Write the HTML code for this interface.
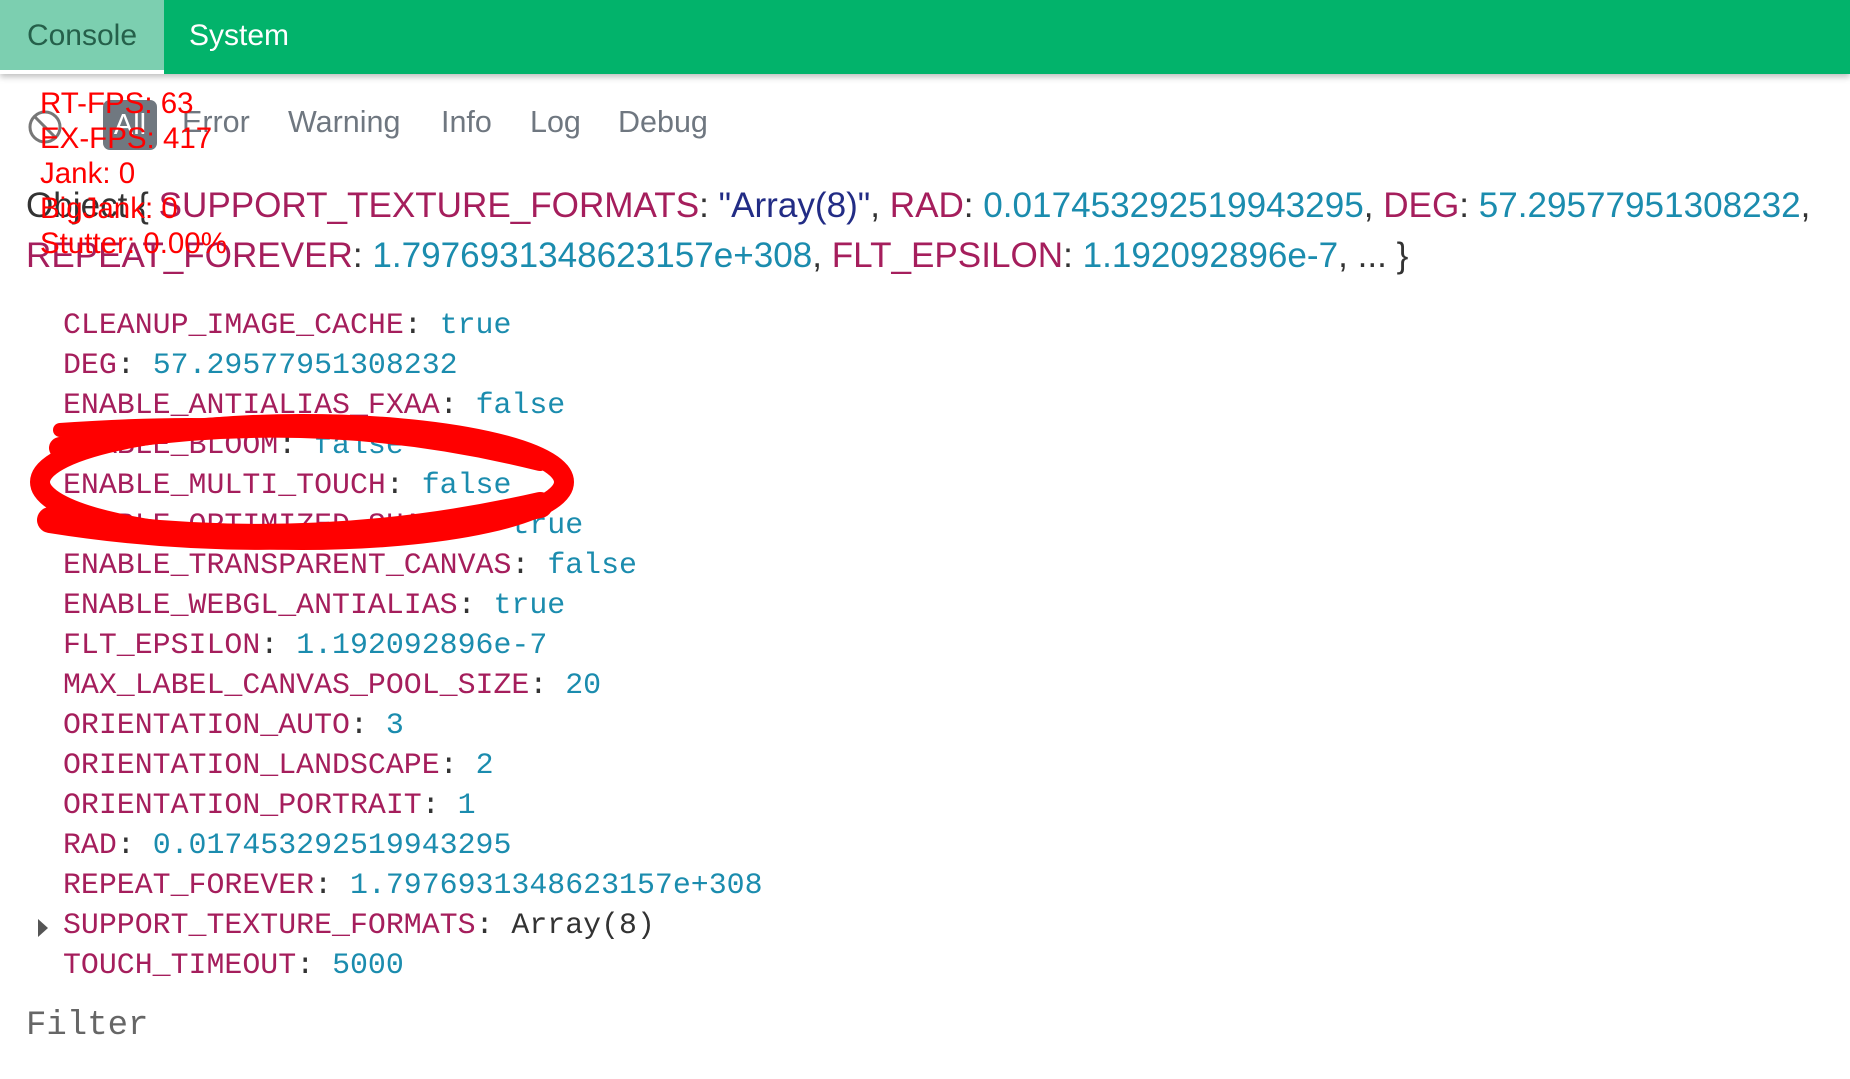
<!DOCTYPE html>
<html><head><meta charset="utf-8"><style>
body{margin:0;width:1850px;height:1079px;background:#fff;position:relative;overflow:hidden;font-family:"Liberation Sans",sans-serif}
.hdr{position:absolute;left:0;top:0;width:1850px;height:74px;background:#02b36b;box-shadow:0 3px 6px rgba(0,0,0,.25)}
.tab{position:absolute;top:0;height:74px;line-height:72px;font-size:30px;color:#fff}
.t1{left:0;width:164px;background:#7ccfb0;color:#25604a;text-align:center;border-bottom:4px solid #fff;box-sizing:border-box}
.t2{left:189px}
.flt{position:absolute;top:105px;font-size:30.5px;color:#6f7780}
.k{color:#a51e5c}.v{color:#1b8cae}.s{color:#222c85}
.line{position:absolute;left:26px;font-size:35.1px;white-space:nowrap;color:#333}
.m{position:absolute;left:63px;font-family:"Liberation Mono",monospace;font-size:29.9px;white-space:nowrap;color:#333}
.fps{position:absolute;left:40px;color:#f00;font-size:29.5px;line-height:35px;top:86px}
</style></head><body>
<div class="hdr"><div class="tab t1">Console</div><div class="tab t2">System</div></div>
<svg style="position:absolute;left:26px;top:108px" width="38" height="38"><circle cx="19" cy="19" r="15" fill="none" stroke="#777" stroke-width="3"/><line x1="9" y1="9" x2="29" y2="29" stroke="#777" stroke-width="3"/></svg>
<div style="position:absolute;left:103px;top:100px;width:54px;height:50px;background:#707880;border-radius:7px;color:#fff;font-size:29px;line-height:50px;text-align:center">All</div>
<div class="flt" style="left:182px">Error</div>
<div class="flt" style="left:288px">Warning</div>
<div class="flt" style="left:441px">Info</div>
<div class="flt" style="left:530px">Log</div>
<div class="flt" style="left:618px">Debug</div>
<div class="line" style="top:186px">Object { <span class="k">SUPPORT_TEXTURE_FORMATS</span>: <span class="s">"Array(8)"</span>, <span class="k">RAD</span>: <span class="v">0.017453292519943295</span>, <span class="k">DEG</span>: <span class="v">57.29577951308232</span>,</div>
<div class="line" style="top:236px"><span class="k">REPEAT_FOREVER</span>: <span class="v">1.7976931348623157e+308</span>, <span class="k">FLT_EPSILON</span>: <span class="v">1.192092896e-7</span>, ... }</div>
<div class="m" style="top:308px"><span class="k">CLEANUP_IMAGE_CACHE</span>: <span class="v">true</span></div>
<div class="m" style="top:348px"><span class="k">DEG</span>: <span class="v">57.29577951308232</span></div>
<div class="m" style="top:388px"><span class="k">ENABLE_ANTIALIAS_FXAA</span>: <span class="v">false</span></div>
<div class="m" style="top:428px"><span class="k">ENABLE_BLOOM</span>: <span class="v">false</span></div>
<div class="m" style="top:468px"><span class="k">ENABLE_MULTI_TOUCH</span>: <span class="v">false</span></div>
<div class="m" style="top:508px"><span class="k">ENABLE_OPTIMIZED_SHADOW</span>: <span class="v">true</span></div>
<div class="m" style="top:548px"><span class="k">ENABLE_TRANSPARENT_CANVAS</span>: <span class="v">false</span></div>
<div class="m" style="top:588px"><span class="k">ENABLE_WEBGL_ANTIALIAS</span>: <span class="v">true</span></div>
<div class="m" style="top:628px"><span class="k">FLT_EPSILON</span>: <span class="v">1.192092896e-7</span></div>
<div class="m" style="top:668px"><span class="k">MAX_LABEL_CANVAS_POOL_SIZE</span>: <span class="v">20</span></div>
<div class="m" style="top:708px"><span class="k">ORIENTATION_AUTO</span>: <span class="v">3</span></div>
<div class="m" style="top:748px"><span class="k">ORIENTATION_LANDSCAPE</span>: <span class="v">2</span></div>
<div class="m" style="top:788px"><span class="k">ORIENTATION_PORTRAIT</span>: <span class="v">1</span></div>
<div class="m" style="top:828px"><span class="k">RAD</span>: <span class="v">0.017453292519943295</span></div>
<div class="m" style="top:868px"><span class="k">REPEAT_FOREVER</span>: <span class="v">1.7976931348623157e+308</span></div>
<div class="m" style="top:908px"><span class="k">SUPPORT_TEXTURE_FORMATS</span>: Array(8)</div>
<svg style="position:absolute;left:36px;top:917px" width="14" height="22"><path d="M2 2 L12 11 L2 20Z" fill="#555"/></svg>
<div class="m" style="top:948px"><span class="k">TOUCH_TIMEOUT</span>: <span class="v">5000</span></div>
<div class="m" style="left:26px;top:1007px;color:#666;font-size:34px">Filter</div>
<svg style="position:absolute;left:0;top:0" width="1850" height="1079">
<g fill="none" stroke="#f00" stroke-linecap="round">
<ellipse cx="302" cy="482" rx="262" ry="58" stroke-width="20"/>
<path d="M60 448 Q300 400 540 460" stroke-width="22"/>
<path d="M50 520 Q300 560 540 505" stroke-width="26"/>
<path d="M60 430 Q200 420 300 430" stroke-width="14"/>
</g></svg>
<div class="fps">RT-FPS: 63<br>EX-FPS: 417<br>Jank: 0<br>BigJank: 0<br>Stutter: 0.00%</div>
</body></html>
